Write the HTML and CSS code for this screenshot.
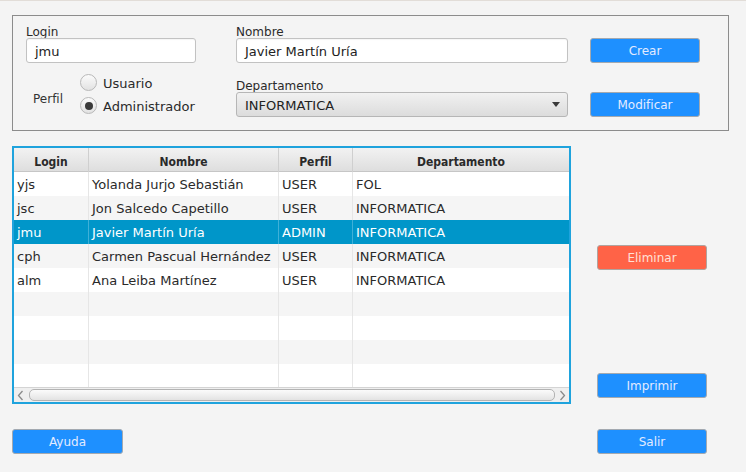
FILE: index.html
```html
<!DOCTYPE html>
<html lang="es">
<head>
<meta charset="utf-8">
<title>Usuarios</title>
<link rel="stylesheet" href="styles.css">
</head>
<body>
<div class="app">
  <section class="panel">
    <div class="col col-login">
      <div class="lbl">Login</div>
      <div class="field">jmu</div>
      <div class="perfil">
        <span class="perfil-lbl">Perfil</span>
        <div class="radios">
          <div class="radio"><span class="dot"></span><span class="rtext">Usuario</span></div>
          <div class="radio checked"><span class="dot"></span><span class="rtext">Administrador</span></div>
        </div>
      </div>
    </div>
    <div class="col col-nombre">
      <div class="lbl">Nombre</div>
      <div class="field">Javier Martín Uría</div>
      <div class="lbl lbl-dep">Departamento</div>
      <div class="combo"><span class="combo-text">INFORMATICA</span><span class="arrow"></span></div>
    </div>
    <div class="col col-btns">
      <button class="btn btn-crear">Crear</button>
      <button class="btn btn-mod">Modificar</button>
    </div>
  </section>

  <div class="main">
    <div class="left">
      <div class="table">
        <div class="thead row">
          <div class="th">Login</div>
          <div class="th">Nombre</div>
          <div class="th">Perfil</div>
          <div class="th">Departamento</div>
        </div>
        <div class="tbody">
          <div class="row"><div class="td">yjs</div><div class="td">Yolanda Jurjo Sebastián</div><div class="td">USER</div><div class="td">FOL</div></div>
          <div class="row odd"><div class="td">jsc</div><div class="td">Jon Salcedo Capetillo</div><div class="td">USER</div><div class="td">INFORMATICA</div></div>
          <div class="row selected"><div class="td">jmu</div><div class="td">Javier Martín Uría</div><div class="td">ADMIN</div><div class="td">INFORMATICA</div></div>
          <div class="row odd"><div class="td">cph</div><div class="td">Carmen Pascual Hernández</div><div class="td">USER</div><div class="td">INFORMATICA</div></div>
          <div class="row"><div class="td">alm</div><div class="td">Ana Leiba Martínez</div><div class="td">USER</div><div class="td">INFORMATICA</div></div>
          <div class="row odd"><div class="td"></div><div class="td"></div><div class="td"></div><div class="td"></div></div>
          <div class="row"><div class="td"></div><div class="td"></div><div class="td"></div><div class="td"></div></div>
          <div class="row odd"><div class="td"></div><div class="td"></div><div class="td"></div><div class="td"></div></div>
          <div class="row"><div class="td"></div><div class="td"></div><div class="td"></div><div class="td"></div></div>
        </div>
        <div class="hscroll">
          <svg class="sarrow" width="7" height="11" viewBox="0 0 7 11"><polyline points="5.5,1 1.5,5.5 5.5,10" fill="none" stroke="#8a8a8a" stroke-width="1.3"/></svg>
          <div class="thumb"></div>
          <svg class="sarrow" width="7" height="11" viewBox="0 0 7 11"><polyline points="1.5,1 5.5,5.5 1.5,10" fill="none" stroke="#8a8a8a" stroke-width="1.3"/></svg>
        </div>
      </div>
      <button class="btn btn-ayuda">Ayuda</button>
    </div>
    <div class="right">
      <button class="btn btn-danger">Eliminar</button>
      <button class="btn btn-imprimir">Imprimir</button>
      <button class="btn btn-salir">Salir</button>
    </div>
  </div>
</div>
</body>
</html>
```

FILE: styles.css
```css
* { box-sizing: border-box; }
html, body { margin: 0; padding: 0; }
body {
  background: #f4f4f4;
  font-family: "DejaVu Sans", Verdana, sans-serif;
  color: #333;
  border-top: 1px solid #e2ddd8;
  width: 746px;
  height: 472px;
  overflow: hidden;
}
.app { display: flex; flex-direction: column; }

.panel {
  margin: 14px 0 0 12px;
  width: 717px;
  height: 116px;
  border: 1px solid #8c8c8c;
  padding: 9px 0 0 13px;
  display: flex;
}
.col { display: flex; flex-direction: column; }
.col-login { width: 170px; }
.col-nombre { width: 332px; margin-left: 40px; }
.col-btns { width: 110px; margin-left: 22px; }

.lbl {
  font-size: 12px;
  line-height: 13px;
  height: 13px;
  padding-top: 1px;
  color: #2a2a2a;
}
.lbl-dep { margin-top: 16px; }

.field {
  height: 25px;
  background: #fff;
  border: 1px solid #c2c2c2;
  border-radius: 3px;
  padding: 2px 8px 0;
  font-size: 13px;
  line-height: 22px;
  color: #222;
  box-shadow: inset 0 1px 1px rgba(0,0,0,0.04);
}

.perfil { display: flex; margin-top: 11px; }
.perfil-lbl {
  width: 54px;
  padding-left: 7px;
  font-size: 12px;
  line-height: 13px;
  margin-top: 19px;
}
.radios { display: flex; flex-direction: column; gap: 6px; }
.radio {
  display: flex;
  align-items: center;
  height: 17px;
  font-size: 13px;
  color: #2a2a2a;
}
.rtext { padding-top: 2px; }
.dot {
  width: 17px;
  height: 17px;
  border-radius: 50%;
  border: 1px solid #b8b8b8;
  background: linear-gradient(#fbfbfb, #e2e2e2);
  margin-right: 6px;
  display: flex;
  align-items: center;
  justify-content: center;
}
.checked .dot::after {
  content: "";
  width: 8px;
  height: 8px;
  border-radius: 50%;
  background: #3a3a3a;
}

.combo {
  height: 25px;
  border: 1px solid #b6b6b6;
  border-radius: 3px;
  background: linear-gradient(#f1f1f1, #dcdcdc);
  display: flex;
  align-items: center;
  justify-content: space-between;
  padding: 0 7px 0 8px;
  font-size: 13px;
  color: #222;
}
.combo-text { padding-top: 2px; }
.arrow {
  width: 0; height: 0;
  border-left: 4px solid transparent;
  border-right: 4px solid transparent;
  border-top: 5px solid #3a3a3a;
}

.btn {
  display: block;
  width: 110px;
  height: 25px;
  padding: 1px 0 0;
  border: 1px solid #a3a9b0;
  border-radius: 3px;
  background: #1e90ff;
  color: #e3ebff;
  font-family: "DejaVu Sans", Verdana, sans-serif;
  font-size: 12px;
  line-height: 23px;
  text-align: center;
}
.btn-crear { margin-top: 13px; }
.btn-mod { margin-top: 29px; }

.main { display: flex; margin-top: 15px; }
.left { margin-left: 12px; display: flex; flex-direction: column; }
.right { margin-left: 26px; padding-top: 99px; display: flex; flex-direction: column; }
.btn-danger { background: #ff6347; color: #ffe0d6; border-color: #b0a4a0; }
.btn-imprimir { margin-top: 103px; }
.btn-salir { margin-top: 31px; }
.btn-ayuda { margin-top: 25px; width: 111px; }

.table {
  width: 559px;
  height: 258px;
  border: 2px solid #1fa3dd;
  background: #fff;
  display: flex;
  flex-direction: column;
}
.row {
  display: grid;
  grid-template-columns: 75px 190px 74px 216px;
  height: 24px;
  background: #fff;
}
.row.odd { background: #f5f5f5; }
.thead {
  background: linear-gradient(#f2f2f2, #dedede);
  border-bottom: 1px solid #c6c6c6;
  height: 24px;
}
.th {
  font-family: "DejaVu Sans Condensed", "DejaVu Sans", sans-serif;
  font-weight: bold;
  font-size: 12px;
  color: #2a2a2a;
  text-align: center;
  line-height: 22px;
  padding-top: 3px;
  border-right: 1px solid #cfcfcf;
}
.th:last-child { border-right: none; }
.tbody { height: 215px; overflow: hidden; }
.td {
  font-size: 13px;
  line-height: 24px;
  padding: 1px 0 0 3px;
  border-right: 1px solid #e6e6e6;
  white-space: nowrap;
  overflow: hidden;
  color: #2a2a2a;
}
.td:last-child { border-right: none; }
.row.selected { background: #0096c9; }
.row.selected .td { color: #fff; border-right-color: #3fb0d8; }

.hscroll {
  height: 15px;
  background: #efefef;
  border-top: 1px solid #d4d4d4;
  display: flex;
  align-items: center;
  padding: 0 3px 0 3px;
}
.sarrow { flex: none; }
.thumb {
  flex: 1;
  height: 12px;
  margin: 0 4px 0 5px;
  border: 1px solid #b3b3b3;
  border-radius: 5px;
  background: linear-gradient(#fbfbfb, #e3e3e3);
}
```
